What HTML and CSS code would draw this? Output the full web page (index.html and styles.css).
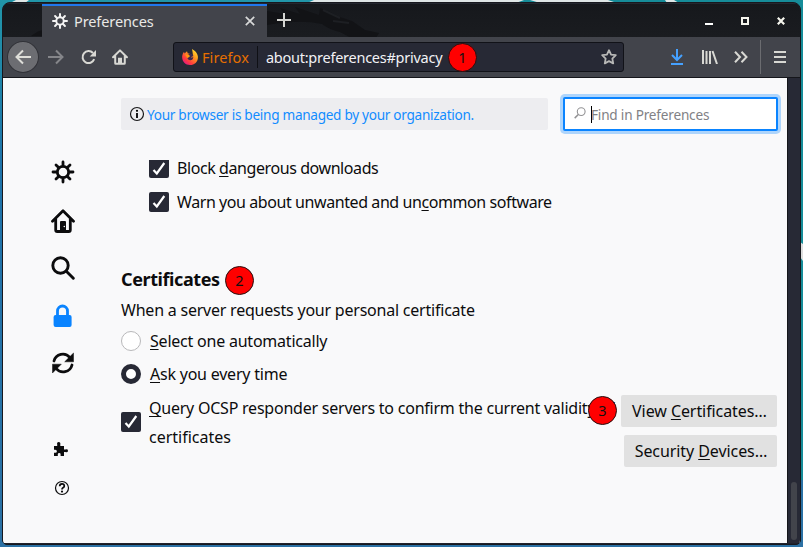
FILE: index.html
```
<!DOCTYPE html>
<html lang="en">
<head>
<meta charset="utf-8">
<title>Preferences</title>
<link rel="stylesheet" href="styles.css">
</head>
<body>
<svg class="wallpaper" width="803" height="547" viewBox="0 0 803 547"><path d="M16 0H29L25 3H10zM314 0H524L516 3H307zM530 0H608L617 3H540zM665 0H674L679 3H667z" fill="#dfe6e6"/><path d="M800 242l3 2v17l-3-4z" fill="#dedede"/></svg>
<div class="window">
  <header class="titlebar">
    <svg class="dragon" width="760" height="33" viewBox="0 0 760 33"><path d="M28 32q8-6 12-6v6zM264 7l18 3-5-6 20 6-5-7 24 8 1-7q11 4 20 9l12 4 13 9 14 3-6 10-20-4-13-7q-10-2-18-8-22-5-55 1z" fill="#121316"/><path d="M320 6l17 8M330 17l16 2" stroke="#1d1f23" stroke-width="2"/></svg>
    <div class="tab">
      <svg class="tab-gear" width="16" height="16" viewBox="0 0 24 24"><g fill="none" stroke="#f4f4f4" stroke-width="3" stroke-linecap="round"><circle cx="12" cy="12" r="5.6"/><path d="M12 1.5v4M12 18.5v4M1.5 12h4M18.5 12h4M4.6 4.6l2.8 2.8M16.6 16.6l2.8 2.8M4.6 19.4l2.8-2.8M16.6 7.4l2.8-2.8"/></g></svg>
      <span class="tab-title">Preferences</span>
      <svg class="tab-close" width="10" height="10" viewBox="0 0 10 10"><path d="M.8.8l8.4 8.4M9.2.8L.8 9.2" stroke="#d8d9d9" stroke-width="1.7"/></svg>
    </div>
    <svg class="plus" width="14" height="14" viewBox="0 0 14 14"><path d="M7 0v14M0 7h14" stroke="#d5d6d2" stroke-width="2"/></svg>
    <div class="controls">
      <svg width="8" height="8" viewBox="0 0 8 8"><path d="M0 7h8" stroke="#fff" stroke-width="2"/></svg>
      <svg width="8" height="8" viewBox="0 0 8 8"><path d="M1 1h6v6H1z" fill="none" stroke="#f5f5ed" stroke-width="2"/></svg>
      <svg width="8" height="8" viewBox="0 0 8 8"><path d="M.8.8l6.4 6.4M7.2.8L.8 7.2" stroke="#f5f5ed" stroke-width="2.2"/></svg>
    </div>
  </header>

  <nav class="toolbar">
    <span class="back"><svg width="16" height="16" viewBox="0 0 16 16"><path d="M16 8H1.5M8 1.5L1.5 8 8 14.5" fill="none" stroke="#deded9" stroke-width="2"/></svg></span>
    <svg class="forward" width="16" height="16" viewBox="0 0 16 16"><path d="M0 8h14.5M8 1.5L14.5 8 8 14.5" fill="none" stroke="#85868a" stroke-width="2"/></svg>
    <svg class="reload" width="16" height="16" viewBox="0 0 16 16"><path d="M13.2 10.2A6 6 0 1 1 12 4" fill="none" stroke="#d8d8d3" stroke-width="2"/><path d="M15 1v6.5H8.7z" fill="#d8d8d3"/></svg>
    <svg class="home" width="16" height="16" viewBox="0 0 24 24"><path d="M1.6 12.4L12 2l10.4 10.4M4.8 10v11.2q0 1 1 1h12.4q1 0 1-1V10" fill="none" stroke="#d8d8d3" stroke-width="3" stroke-linejoin="round" stroke-linecap="round"/><path d="M9 22v-9h6v9z" fill="#d8d8d3"/></svg>
    <div class="urlbar">
      <svg width="16" height="16" viewBox="0 0 16 16"><defs><linearGradient id="fire" x1="1" y1="0" x2=".2" y2="1"><stop stop-color="#fff138"/><stop offset=".4" stop-color="#ff9d1e"/><stop offset=".75" stop-color="#ff3d3e"/><stop offset="1" stop-color="#e31587"/></linearGradient></defs><path d="M10 0q5 2.500 5.800 7C16.600 12 13 16 8 16S-.3 12 .2 7Q.5 4.500 2 2.700L2.500 4.500 5 2.200 5.800 4.500Q9 4 11 7 10.500 2 10 0z" fill="url(#fire)"/><path d="M5 6.300l3-1.700q2.500.2 3.500 2.500l-2.800 1.200q1.800.6 2.600-.2Q11 11.500 8 11.300 4.800 10.800 5 6.300z" fill="#3a2a4e"/><path d="M3 5.500l4 .3 1 1.500-2.500 2z" fill="#ff980e"/></svg>
      <span class="brand">Firefox</span>
      <i class="divider"></i>
      <span class="url">about:preferences#privacy</span>
      <svg class="star" width="16" height="16" viewBox="0 0 16 16"><path d="M8 1.200l2.050 4.350 4.750.65-3.450 3.350.85 4.850L8 12.100l-4.200 2.300.85-4.850L1.200 6.200l4.750-.65z" fill="none" stroke="#b7b7b6" stroke-width="1.800" stroke-linejoin="round"/></svg>
      <b class="badge badge-one">1</b>
    </div>
    <svg class="download" width="14" height="16" viewBox="0 0 14 16"><path d="M7 0v10M2 6l5 5 5-5M1 15h12" fill="none" stroke="#45a1ff" stroke-width="2"/></svg>
    <svg class="library" width="16" height="14" viewBox="0 0 16 14"><path d="M1 0v14M4.500 1v13M8 1v13M10.500 1L15 14" fill="none" stroke="#d8d8d3" stroke-width="2"/></svg>
    <svg class="more" width="14" height="12" viewBox="0 0 14 12"><path d="M1 .7L6 6l-5 5.300M7.500.7l5 5.300-5 5.300" fill="none" stroke="#d8d8d3" stroke-width="2"/></svg>
    <i class="separator"></i>
    <svg class="menu" width="12" height="12" viewBox="0 0 12 12"><path d="M0 1h12M0 6h12M0 11h12" stroke="#d8d8d3" stroke-width="2"/></svg>
  </nav>

  <div class="page">
    <aside class="categories">
      <svg width="24" height="24" viewBox="0 0 24 24"><g fill="none" stroke="#0c0c0d" stroke-width="2.800" stroke-linecap="round"><circle cx="12" cy="12" r="5.700"/><path d="M12 2v4M12 18v4M2 12h4M18 12h4M5 5l2.600 2.600M16.400 16.400L19 19M5 19l2.600-2.600M16.400 7.600L19 5"/></g></svg>
      <svg width="24" height="24" viewBox="0 0 24 24"><path d="M1.500 12.200L12 1.700l10.500 10.500M4.700 10v11q0 1.500 1.500 1.500h11.600q1.500 0 1.500-1.500V10" fill="none" stroke="#0c0c0d" stroke-width="2.800" stroke-linejoin="round" stroke-linecap="round"/><path d="M9 22v-9q0-1 1-1h4q1 0 1 1v9z" fill="#0c0c0d"/><circle cx="13.300" cy="17.500" r=".8" fill="#f9f9fa"/></svg>
      <svg width="24" height="24" viewBox="0 0 24 24"><g fill="none" stroke="#0c0c0d" stroke-width="2.900" stroke-linecap="round"><circle cx="9.500" cy="9.500" r="7.700"/><path d="M15.300 15.300l7 7"/></g></svg>
      <svg width="24" height="24" viewBox="0 0 24 24"><path d="M6.500 12V7a5 5 0 0 1 10 0v5" fill="none" stroke="#0a84ff" stroke-width="2.800"/><rect x="2.600" y="11" width="18" height="12" rx="2" fill="#0a84ff"/></svg>
      <svg width="24" height="24" viewBox="0 0 24 24"><path d="M3 10a9 9 0 0 1 15.800-3.500M21 14A9 9 0 0 1 5.200 17.500" fill="none" stroke="#0c0c0d" stroke-width="2.800" stroke-linecap="round"/><path d="M22.500 2v8.800h-8.800zM1.500 22v-8.800h8.800z" fill="#0c0c0d" stroke="#0c0c0d" stroke-width=".5" stroke-linejoin="round"/></svg>
      <svg class="addons" width="16" height="16" viewBox="0 0 16 16"><path d="M1 5h3.200V3.600Q3.600 1 5.700 1t1.600 2.600V5H11v3.400h1.200q2.800-.7 2.800 1.300t-2.800 1.400H11V15H7.600v-1.800q0-1.300-1.400-1.300t-1.400 1.300V15H1v-3.200h1.300q1.600 0 1.600-1.500T2.300 8.800H1z" fill="#0c0c0d"/></svg>
      <svg class="help" width="16" height="16" viewBox="0 0 16 16"><circle cx="8" cy="8" r="6.500" fill="none" stroke="#0c0c0d" stroke-width="1.200"/><path d="M5.700 6.200q0-2.400 2.300-2.400t2.300 2.100Q10.300 7 9 7.700q-1 .6-1 1.700" fill="none" stroke="#0c0c0d" stroke-width="1.700"/><circle cx="8" cy="11.600" r="1.100" fill="#0c0c0d"/></svg>
    </aside>
    <main>
      <div class="top">
        <div class="notice"><svg width="16" height="16" viewBox="0 0 16 16"><circle cx="8" cy="8" r="6.500" fill="none" stroke="#171719" stroke-width="1.200"/><circle cx="8" cy="4.800" r="1.100"/><path d="M8 7v5" stroke="#171719" stroke-width="2"/></svg><span>Your browser is being managed by your organization.</span></div>
        <div class="search"><svg width="12" height="12" viewBox="0 0 12 12"><circle cx="7.200" cy="4.600" r="3.900" fill="none" stroke="#939395" stroke-width="1.100"/><path d="M4.300 7.500L.7 11.100" stroke="#939395" stroke-width="1.500"/></svg><i class="caret"></i><span>Find in Preferences</span></div>
      </div>
      <div class="option nested clipped"><i class="check"><svg width="20" height="20" viewBox="0 0 20 20"><path d="M4.500 11l3.300 3.500L15.300 4" /></svg></i><span class="t-block">Block <u>d</u>angerous downloads</span></div>
      <div class="option nested warn"><i class="check"><svg width="20" height="20" viewBox="0 0 20 20"><path d="M4.500 11l3.300 3.500L15.300 4" /></svg></i><span class="t-warn">Warn you about unwanted and un<u>c</u>ommon software</span></div>
      <h2><span>Certificates</span><b class="badge">2</b></h2>
      <p>When a server requests your personal certificate</p>
      <div class="option radio-row"><i class="radio"></i><span class="t-select"><u>S</u>elect one automatically</span></div>
      <div class="option radio-row"><i class="radio selected"></i><span class="t-ask"><u>A</u>sk you every time</span></div>
      <div class="bottom">
        <div class="query"><i class="check"><svg width="20" height="20" viewBox="0 0 20 20"><path d="M4.500 11l3.300 3.500L15.300 4" /></svg></i><span><span class="t-query"><u>Q</u>uery OCSP responder servers to confirm the current validity of</span><br><span class="t-cert">certificates</span></span></div>
        <div class="buttons"><b class="badge badge-three">3</b><button class="view"><span>View <u>C</u>ertificates…</span></button><button class="devices"><span>Security <u>D</u>evices…</span></button></div>
      </div>
    </main>
    <div class="scrollbar"><i></i></div>
  </div>
</div>
</body>
</html>
```

FILE: styles.css
```
* { box-sizing: border-box; }
html, body { width: 803px; height: 547px; overflow: hidden; }
html { background: linear-gradient(90deg, transparent 50%, #168c99 50%) 0 0 / 803px 480px no-repeat, linear-gradient(#2196a9, #1f74aa 30%, #2c71a4); }
body { margin: 0; padding: 2px; font-family: "Noto Sans", sans-serif; font-size: 16px; color: #0c0c0d; }
svg { display: block; flex: none; }
i { display: block; flex: none; }
.wallpaper { position: absolute; left: 0; top: 0; }
.window { position: relative; width: 799px; height: 543px; border: 1px solid #17181e; border-radius: 8px 8px 5px 5px; background: #20222c; overflow: hidden; }
.titlebar { position: relative; display: flex; height: 34px; padding-left: 39px; border-top: 1px solid #24272f; background: linear-gradient(#16181c, #1a1c20); }
.dragon { position: absolute; left: 0; top: 0; }
.tab { position: relative; display: flex; align-items: center; width: 225px; height: 34px; padding: 0 12px 2px 10px; background: #42444b; border-top: 2px solid #2078ed; }
.tab-title { margin-left: 6px; font-size: 14.500px; line-height: 20px; letter-spacing: -.1px; color: #e9e9e6; }
.tab-close { margin-left: auto; }
.plus { position: relative; margin: 9px 0 0 10px; }
.controls { display: flex; gap: 28px; margin: 13px 15px 0 auto; }
.toolbar { display: flex; align-items: center; height: 41px; padding: 0 14px 0 4px; background: #42444b; border-bottom: 1px solid #15161b; }
.back { display: grid; place-items: center; width: 32px; height: 32px; border-radius: 50%; border: 1px solid #303137; background: #6c6d72; }
.forward { margin-left: 9px; }
.reload { margin-left: 17px; }
.home { margin-left: 15px; }
.urlbar { display: flex; align-items: center; width: 452px; height: 30px; margin-left: 45px; padding: 0 6px 0 8px; border: 1px solid #111218; border-radius: 3px; background: #272935; }
.brand { width: 48px; margin-left: 4px; font-size: 14.500px; letter-spacing: .1px; color: #e66f00; white-space: nowrap; }
.divider { width: 1px; height: 22px; margin: 0 8px 0 7px; background: #0f1015; }
.url { width: 177px; font-size: 14.500px; letter-spacing: -.25px; color: #f2f2f5; white-space: nowrap; }
.badge { display: grid; place-items: center; flex: none; width: 29px; height: 29px; border: 1px solid #241010; border-radius: 50%; background: #f00; color: #111; font-weight: 400; font-size: 14.500px; line-height: 1; letter-spacing: 0; }
.badge-one { order: 4; margin-left: 5px; }
.star { order: 5; margin-left: auto; }
.download { margin-left: 46px; }
.library { margin-left: 18px; }
.more { margin-left: 16px; }
.separator { width: 1px; height: 34px; margin-left: 12px; background: #6b6c70; }
.menu { margin-left: 13px; }
.page { display: flex; height: 465px; background: #f9f9fa; }
.categories { width: 118px; padding: 82px 0 0 48px; }
.categories svg { margin-bottom: 24px; margin-left: -.5px; }
.categories svg:nth-child(1) { margin-bottom: 25px; }
.categories svg:nth-child(3) { margin-top: -1px; }
.categories svg:nth-child(5) { margin-top: -1px; }
.categories .addons { margin: 66px 0 23px 2px; }
.categories .help { margin: 0 0 0 3px; }
main { width: 666px; }
.top { display: flex; align-items: center; justify-content: space-between; height: 34px; margin: 19px 9px 0 0; }
.notice { display: flex; align-items: center; width: 427px; height: 32px; padding-left: 8px; border-radius: 2px; background: #ededf0; font-size: 13.600px; letter-spacing: -.29px; color: #128cff; white-space: nowrap; }
.notice span { margin-left: 2px; }
.search { display: flex; align-items: center; width: 215px; height: 34px; padding-left: 9px; border: 2px solid #0a84ff; border-radius: 2px; box-shadow: 0 0 0 3px #aed5fc; background: #fff; font-size: 13.600px; letter-spacing: -.2px; color: #818185; white-space: nowrap; }
.search svg { margin-top: -3px; }
.search span { margin-left: -1px; }
.caret { width: 1px; height: 17px; margin-left: 5px; background: #000; }
.option { display: flex; align-items: center; height: 20px; line-height: 20px; white-space: nowrap; }
.nested { margin-left: 28px; letter-spacing: -.42px; }
.clipped { margin-top: 27px; }
.clipped .check { height: 18px; margin-top: 2px; overflow: hidden; border-radius: 0 0 2px 2px; }
.clipped .check svg { margin-top: -1px; }
.warn { margin-top: 14px; }
.check { width: 20px; height: 20px; border-radius: 2px; background: #272935; }
.check path { fill: none; stroke: #fff; stroke-width: 2.200; }
.option span { margin-left: 8px; }
.radio-row span { margin-left: 9px; letter-spacing: -.22px; }
u { text-decoration-thickness: 1px; text-underline-offset: 2px; text-decoration-skip-ink: none; }
h2 { display: flex; align-items: center; height: 30px; margin: 53px 0 0; font-size: 18px; font-weight: 700; letter-spacing: -.4px; }
h2 span { width: 104px; margin-top: -2px; white-space: nowrap; }
p { margin: 5px 0 0; line-height: 20px; height: 20px; letter-spacing: -.22px; white-space: nowrap; }
.radio-row { margin-top: 13px; }
p + .radio-row { margin-top: 11px; }
.radio { width: 20px; height: 20px; border: 1px solid #b8b8ba; border-radius: 50%; background: #fff; }
.radio.selected { border: 5px solid #272935; }
.bottom { display: flex; align-items: flex-start; margin-top: 10px; }
.query { display: flex; align-items: center; width: 500px; height: 58px; line-height: 29px; white-space: nowrap; }
.query .check { margin-top: -2px; }
.query > span { width: 470px; margin-left: 8px; }
.t-query { letter-spacing: -.23px; }
.buttons { position: relative; display: flex; flex-direction: column; align-items: flex-end; gap: 8px; width: 156px; margin-top: 1px; }
button { height: 32px; padding: 0 0 0 1px; border: 0; border-radius: 2px; background: #e1e1e1; color: #0c0c0d; font: inherit; letter-spacing: -.08px; white-space: nowrap; }
.view { width: 156px; }
.devices { width: 153px; }
.badge-three { position: absolute; left: -33px; top: 1px; }
.scrollbar { display: flex; align-items: flex-end; width: 13px; padding: 0 4px 3px 3px; border-left: 1px solid #15161b; background: #272935; }
.scrollbar i { width: 6px; height: 58px; border-radius: 3px; background: #42444b; }
```
